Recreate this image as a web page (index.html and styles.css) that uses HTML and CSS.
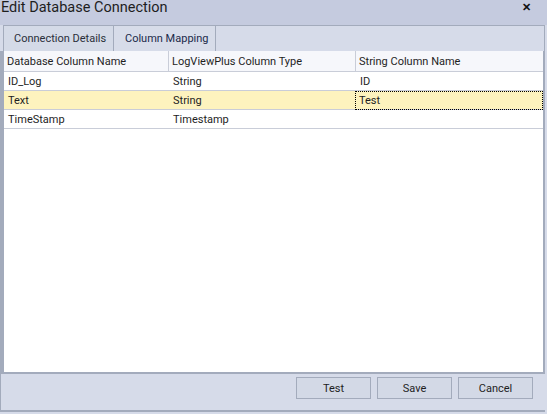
FILE: index.html
```html
<!DOCTYPE html>
<html>
<head>
<meta charset="utf-8">
<link rel="stylesheet" href="styles.css">
</head>
<body>
<div class="window">
  <div class="titlebar">
    <span class="title">Edit Database Connection</span>
    <span class="close">✕</span>
  </div>
  <div class="tabstrip">
    <div class="tab">Connection Details</div>
    <div class="tab active">Column Mapping</div>
    <div class="tab-fill"></div>
  </div>
  <div class="gridframe">
    <div class="grid">
      <div class="row header">
        <div class="cell c1">Database Column Name</div>
        <div class="cell c2">LogViewPlus Column Type</div>
        <div class="cell c3">String Column Name</div>
      </div>
      <div class="row">
        <div class="cell c1">ID_Log</div>
        <div class="cell c2">String</div>
        <div class="cell c3">ID</div>
      </div>
      <div class="row selected">
        <div class="cell c1">Text</div>
        <div class="cell c2">String</div>
        <div class="cell c3 focus">Test</div>
      </div>
      <div class="row">
        <div class="cell c1">TimeStamp</div>
        <div class="cell c2">Timestamp</div>
        <div class="cell c3"></div>
      </div>
    </div>
  </div>
  <div class="footer">
    <button class="btn">Test</button>
    <button class="btn">Save</button>
    <button class="btn">Cancel</button>
  </div>
</div>
</body>
</html>
```

FILE: styles.css
```css
html, body {
  margin: 0;
  padding: 0;
}
body {
  width: 547px;
  height: 414px;
  overflow: hidden;
  background: #d6dbe9;
  font-family: Roboto, "Liberation Sans", Arial, sans-serif;
  font-size: 11px;
  color: #1e1e1e;
}
.window {
  width: 547px;
  height: 414px;
  display: flex;
  flex-direction: column;
}
.titlebar {
  height: 25px;
  background: #c5cbdf;
  display: flex;
  align-items: flex-start;
  justify-content: space-between;
  box-sizing: border-box;
  padding: 0 16px 0 1px;
}
.title {
  font-size: 14.5px;
  line-height: 15px;
  color: #1e1e1e;
}
.close {
  font-size: 11px;
  line-height: 11px;
  margin-top: 2px;
  font-weight: bold;
  color: #111;
}
.tabstrip {
  height: 26px;
  box-sizing: border-box;
  display: flex;
  padding-left: 3px;
  padding-right: 2px;
  background: #d6dbe9;
}
.tab {
  box-sizing: border-box;
  height: 26px;
  border-top: 1px solid #a3abbc;
  border-left: 1px solid #a3abbc;
  background: #d4dae7;
  color: #2a2f3a;
  display: flex;
  align-items: center;
  padding-bottom: 1px;
}
.tab:first-child {
  width: 110px;
  padding-left: 10px;
}
.tab.active {
  width: 102px;
  padding-left: 11px;
  background: #d7dce9;
  color: #1b2a4a;
}
.tab-fill {
  flex: 1;
  height: 26px;
  box-sizing: border-box;
  border-top: 1px solid #a3abbc;
  border-left: 1px solid #a3abbc;
  border-right: 1px solid #a3abbc;
  background: #d6dbe9;
}
.gridframe {
  height: 323px;
  box-sizing: border-box;
  border-left: 4px solid #a3abbc;
  border-right: 2px solid #a3abbc;
  border-bottom: 2px solid #a3abbc;
  margin-right: 2px;
  background: #ffffff;
}
.grid {
  display: flex;
  flex-direction: column;
}
.row {
  display: flex;
  height: 19px;
  box-sizing: border-box;
  border-bottom: 1px solid #c9cdd8;
  background: #ffffff;
}
.row.header {
  height: 21px;
  background: #f6f7fb;
}
.row.selected {
  background: #fdf3be;
}
.cell {
  box-sizing: border-box;
  display: flex;
  align-items: center;
  padding-left: 4px;
  white-space: nowrap;
}
.header .cell {
  padding-left: 3px;
}
.c1 {
  width: 164px;
}
.c2 {
  width: 187px;
}
.c3 {
  flex: 1;
}
.row .c2, .row .c3 {
  border-left: 1px solid transparent;
}
.header .c2, .header .c3 {
  border-left-color: #c9cdd8;
}
.focus {
  border: 1px dotted #000 !important;
  margin-bottom: -1px;
  padding-left: 3px;
}
.footer {
  height: 38px;
  box-sizing: border-box;
  border-left: 1px solid #a3abbc;
  border-bottom: 2px solid #a3abbc;
  margin-right: 2px;
  display: flex;
  justify-content: flex-end;
  align-items: flex-start;
  padding-top: 3px;
  padding-right: 12px;
  gap: 6px;
  background: #d6dbe9;
}
.btn {
  width: 75px;
  height: 22px;
  box-sizing: border-box;
  border: 1px solid #a3abbc;
  background: #d3d9e6;
  font-family: Roboto, "Liberation Sans", Arial, sans-serif;
  font-size: 11px;
  color: #1e1e1e;
  padding: 0;
  margin: 0;
}
```
